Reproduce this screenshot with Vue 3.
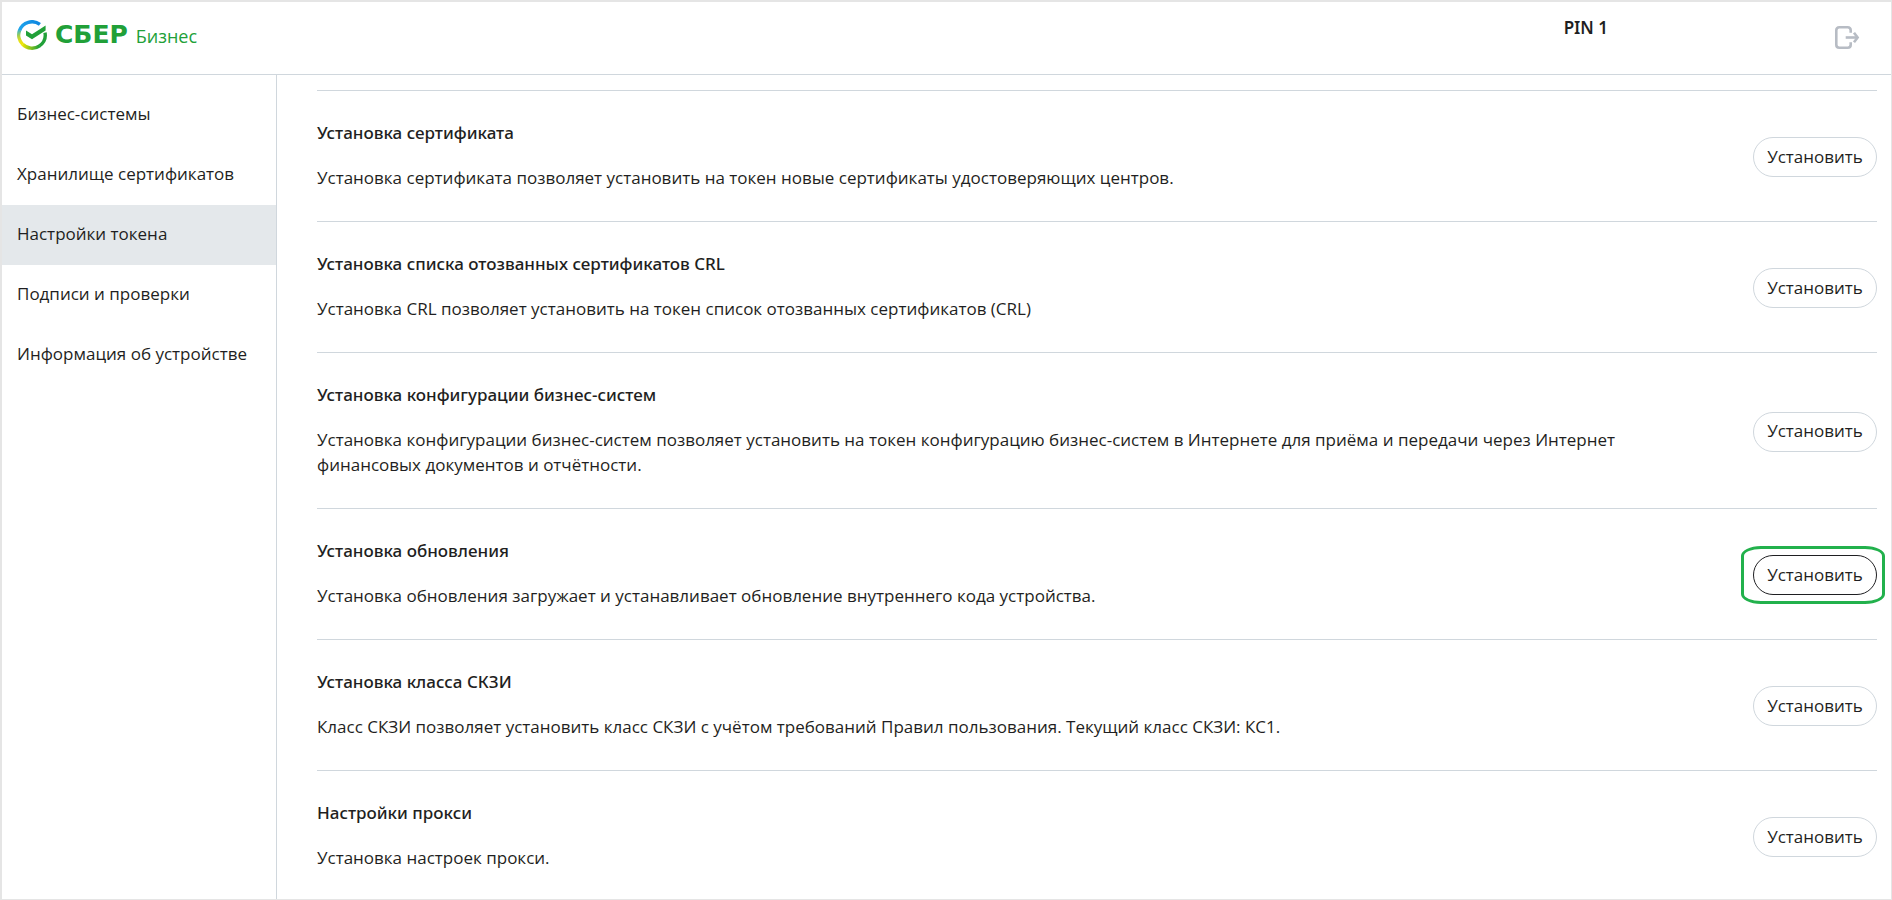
<script setup>
import { ref } from 'vue'

const activeMenu = ref('token')

const menu = [
  { id: 'systems', label: 'Бизнес-системы' },
  { id: 'certs', label: 'Хранилище сертификатов' },
  { id: 'token', label: 'Настройки токена' },
  { id: 'signs', label: 'Подписи и проверки' },
  { id: 'device', label: 'Информация об устройстве' }
]

const settings = [
  {
    id: 'cert',
    title: 'Установка сертификата',
    text: 'Установка сертификата позволяет установить на токен новые сертификаты удостоверяющих центров.'
  },
  {
    id: 'crl',
    title: 'Установка списка отозванных сертификатов CRL',
    text: 'Установка CRL позволяет установить на токен список отозванных сертификатов (CRL)'
  },
  {
    id: 'config',
    title: 'Установка конфигурации бизнес-систем',
    text: 'Установка конфигурации бизнес-систем позволяет установить на токен конфигурацию бизнес-систем в Интернете для приёма и передачи через Интернет финансовых документов и отчётности.'
  },
  {
    id: 'update',
    title: 'Установка обновления',
    text: 'Установка обновления загружает и устанавливает обновление внутреннего кода устройства.',
    marked: true
  },
  {
    id: 'skzi',
    title: 'Установка класса СКЗИ',
    text: 'Класс СКЗИ позволяет установить класс СКЗИ с учётом требований Правил пользования. Текущий класс СКЗИ: КС1.'
  },
  {
    id: 'proxy',
    title: 'Настройки прокси',
    text: 'Установка настроек прокси.'
  }
]
</script>

<template>
  <div class="page">
    <header class="header">
      <a class="logo" href="#" aria-label="СБЕР Бизнес">
        <svg class="logo-mark" width="30" height="30" viewBox="0 0 30 30" fill="none">
          <defs>
            <linearGradient id="ring-top" x1="3" y1="10" x2="22" y2="3" gradientUnits="userSpaceOnUse">
              <stop offset="0" stop-color="#1fa4ec" />
              <stop offset="1" stop-color="#0f87e0" />
            </linearGradient>
            <linearGradient id="ring-left" x1="2" y1="9" x2="6" y2="25" gradientUnits="userSpaceOnUse">
              <stop offset="0" stop-color="#27aee0" />
              <stop offset="0.4" stop-color="#a5cf4a" />
              <stop offset="0.7" stop-color="#e4e01c" />
              <stop offset="1" stop-color="#f2e700" />
            </linearGradient>
            <linearGradient id="ring-bottom" x1="5" y1="24" x2="22" y2="25" gradientUnits="userSpaceOnUse">
              <stop offset="0" stop-color="#f2e700" />
              <stop offset="1" stop-color="#21a038" />
            </linearGradient>
          </defs>
          <path d="M2.6 10.3A13.2 13.2 0 0 1 22.9 4.4" stroke="url(#ring-top)" stroke-width="3.4" />
          <path d="M5.7 24.4A13.2 13.2 0 0 1 2.7 10" stroke="url(#ring-left)" stroke-width="3.4" />
          <path d="M22.6 25.8A13.2 13.2 0 0 1 5.6 24.3" stroke="url(#ring-bottom)" stroke-width="3.4" />
          <path d="M28 12.6A13.2 13.2 0 0 1 22.4 25.9" stroke="#21a038" stroke-width="3.4" />
          <path d="M9 10.5L15 14.2L28.6 5.6V10.6L15 19.2L9 15.4Z" fill="#21a038" />
        </svg>
        <span class="logo-name">СБЕР</span>
        <span class="logo-product">Бизнес</span>
      </a>
      <div class="user">PIN 1</div>
      <button class="logout" type="button" aria-label="Выход">
        <svg width="26" height="26" viewBox="0 0 26 26" fill="none" stroke="#b7bcc4" stroke-width="2.6">
          <path d="M16.7 7.8V5.3Q16.7 2.3 13.7 2.3H5.3Q2.3 2.3 2.3 5.3V19.7Q2.3 22.7 5.3 22.7H13.7Q16.7 22.7 16.7 19.7V17.2" />
          <path d="M11.7 12.5H23.5" />
          <path d="M20 7.8L23.6 12.5L20 17.2" />
        </svg>
      </button>
    </header>

    <div class="body">
      <nav class="sidebar">
        <a
          v-for="item in menu"
          :key="item.id"
          href="#"
          class="menu-item"
          :class="{ active: activeMenu === item.id }"
          @click.prevent="activeMenu = item.id"
        >{{ item.label }}</a>
      </nav>

      <main class="content">
        <section v-for="item in settings" :key="item.id" class="setting">
          <div class="setting-info">
            <h2 class="setting-title">{{ item.title }}</h2>
            <p class="setting-text">{{ item.text }}</p>
          </div>
          <div class="setting-action" :class="{ marked: item.marked }">
            <button class="install-btn" type="button">Установить</button>
          </div>
        </section>
      </main>
    </div>
  </div>
</template>

<style>
body {
  margin: 0;
}
</style>

<style scoped>
.page {
  box-sizing: border-box;
  height: 100vh;
  display: flex;
  flex-direction: column;
  overflow: hidden;
  border: 1px solid #e5e5e5;
  border-width: 2px 1px 1px 2px;
  background: #ffffff;
  color: #1f1f22;
  font-family: 'Open Sans', 'Noto Sans', sans-serif;
  font-size: 17px;
  line-height: 25px;
}

/* ===== Header ===== */
.header {
  box-sizing: border-box;
  flex-shrink: 0;
  height: 73px;
  display: flex;
  align-items: flex-start;
  padding: 0 31px 0 15px;
  border-bottom: 1px solid #d0d7dd;
}

.logo {
  display: flex;
  align-items: baseline;
  padding-top: 13px;
  color: #21a038;
  text-decoration: none;
}

.logo-mark {
  align-self: center;
  margin-right: 8px;
}

.logo-name {
  font-family: 'DejaVu Sans', sans-serif;
  font-size: 25px;
  font-weight: 700;
  line-height: 40px;
}

.logo-product {
  margin-left: 8px;
  font-size: 18px;
}

.user {
  margin-left: auto;
  padding-top: 13px;
  font-family: 'Noto Sans', sans-serif;
  font-weight: 600;
}

.logout {
  display: flex;
  margin: 23px 0 0 226px;
  padding: 0;
  border: none;
  background: none;
  cursor: pointer;
}

/* ===== Layout ===== */
.body {
  flex: 1;
  min-height: 0;
  display: flex;
}

.sidebar {
  box-sizing: border-box;
  flex-shrink: 0;
  width: 275px;
  padding-top: 10px;
  border-right: 1px solid #d0d7dd;
}

.menu-item {
  display: block;
  padding: 0 15px 2px;
  line-height: 58px;
  color: inherit;
  text-decoration: none;
  white-space: nowrap;
}

.menu-item.active {
  background: #e4e8eb;
}

.content {
  flex: 1;
  min-width: 0;
  padding: 15px 14px 0 40px;
  overflow-y: auto;
  scrollbar-width: none;
}

/* ===== Settings list ===== */
.setting {
  display: flex;
  align-items: center;
  justify-content: space-between;
  gap: 120px;
  padding: 29px 0 27px;
  border-top: 1px solid #d0d7dd;
}

.setting-info {
  padding-bottom: 4px;
}

.setting-title {
  margin: 0 0 20px;
  font-family: 'Noto Sans', sans-serif;
  font-size: inherit;
  font-weight: 500;
}

.setting-text {
  margin: 0;
}

.setting-action {
  position: relative;
  flex-shrink: 0;
}

.install-btn {
  box-sizing: border-box;
  min-width: 124px;
  height: 40px;
  padding: 0 12px 2px;
  border: 1px solid #d0d7dd;
  border-radius: 20px;
  background: #ffffff;
  color: inherit;
  font: inherit;
  cursor: pointer;
}

.marked .install-btn {
  border-color: #1f1f22;
}

.marked::after {
  content: '';
  position: absolute;
  inset: -9px -8px -9px -12px;
  border: 3px solid #22b14c;
  border-radius: 20px / 10px;
  pointer-events: none;
}
</style>
